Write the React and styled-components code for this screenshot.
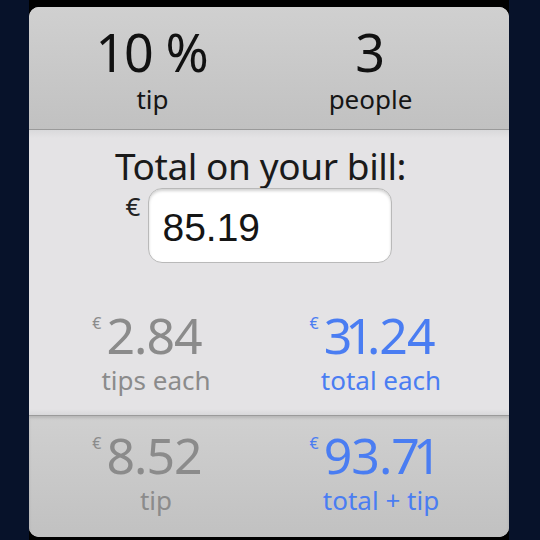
import React from 'react';
import styled, { createGlobalStyle } from 'styled-components';

const GlobalStyle = createGlobalStyle`
  html, body {
    margin: 0;
    padding: 0;
    background: #07122a;
    font-family: "Noto Sans", "DejaVu Sans", sans-serif;
  }
`;

const Screen = styled.div`
  width: 540px;
  height: 540px;
  background: #07122a;
  padding-left: 29px;
  box-sizing: border-box;
  overflow: hidden;
`;

const Phone = styled.div`
  width: 480px;
  height: 540px;
  background: #000;
  padding-top: 7px;
  box-sizing: border-box;
`;

const Card = styled.div`
  height: 530px;
  border-radius: 10px;
  overflow: hidden;
  display: flex;
  flex-direction: column;
  background: #e3e2e4;
`;

const Band = styled.div`
  height: ${p => p.h}px;
  box-sizing: border-box;
  background: linear-gradient(#d0d0d0, #c1c1c1);
  display: grid;
  grid-template-columns: ${p => p.cols || '225px 225px'};
  padding-left: 10px;
  align-content: start;
  padding-top: ${p => p.pt}px;
  border-top: ${p => (p.bottom ? '1px solid #9a9a9a' : 'none')};
  border-bottom: ${p => (p.bottom ? 'none' : '1px solid #9a9a9a')};
  box-shadow: ${p => (p.bottom ? 'inset 0 2px 3px rgba(0,0,0,0.12)' : 'none')};
`;

const Middle = styled.div`
  flex: 1;
  background: linear-gradient(#d9d9db, #e4e3e5 8px, #e4e3e5 calc(100% - 6px), #d8d8da);
  display: flex;
  flex-direction: column;
  align-items: center;
  padding-top: 13px;
`;

const Cell = styled.div`
  display: flex;
  flex-direction: column;
  align-items: center;
`;

const Big = styled.div`
  font-size: 52px;
  line-height: 52px;
  letter-spacing: -1px;
  color: #111;
`;

const Caption = styled.div`
  font-size: 26px;
  line-height: 30px;
  margin-top: ${p => p.gap || 0}px;
  color: ${p => p.color || '#151515'};
  padding-left: ${p => p.shift || 0}px;
`;

const Heading = styled.div`
  font-size: 37px;
  line-height: 45px;
  color: #1a1a1a;
  letter-spacing: -0.4px;
  margin-left: -17px;
`;

const InputRow = styled.div`
  display: flex;
  align-items: flex-start;
  margin-left: -20px;
`;

const Euro = styled.span`
  font-size: 26px;
  line-height: 30px;
  color: #222;
  margin-top: 3px;
  margin-right: 8px;
`;

const BillInput = styled.input`
  width: 244px;
  height: 75px;
  box-sizing: border-box;
  border: 1px solid #b9b9b9;
  border-radius: 14px;
  background: #fff;
  box-shadow: inset 0 2px 3px rgba(0,0,0,0.18);
  font-family: "Liberation Sans", Arial, sans-serif;
  font-size: 39px;
  color: #151515;
  padding: 4px 0 0 13px;
  outline: none;
`;

const Results = styled.div`
  display: grid;
  grid-template-columns: 225px 225px;
  padding-left: 10px;
  align-self: stretch;
  margin-top: 46px;
`;

const Amount = styled.div`
  display: flex;
  align-items: flex-start;
  padding-right: 9px;
  color: ${p => p.color};
`;

const Sup = styled.span`
  font-size: 16px;
  line-height: 20px;
  margin-top: 4px;
  margin-right: 5px;
`;

const Value = styled.span`
  font-size: 50px;
  line-height: 52px;
  letter-spacing: -1px;
`;

// the app font sets a narrow "1"
const One = styled.span`
  margin: 0 -6px;
`;

const GRAY = '#8b8b8b';
const BLUE = '#4a7df2';

function Money({ value, color }) {
  return (
    <Amount color={color}>
      <Sup>€</Sup>
      <Value>
        {value.split('').map((c, i) => (c === '1' ? <One key={i}>1</One> : c))}
      </Value>
    </Amount>
  );
}

export default function App() {
  return (
    <Screen>
      <GlobalStyle />
      <Phone>
        <Card>
          <Band h={123} pt={19} cols="225px 211px">
            <Cell>
              <Big>10 %</Big>
              <Caption shift={2} gap={6}>tip</Caption>
            </Cell>
            <Cell>
              <Big>3</Big>
              <Caption shift={2} gap={6}>people</Caption>
            </Cell>
          </Band>
          <Middle>
            <Heading>Total on your bill:</Heading>
            <InputRow>
              <Euro>€</Euro>
              <BillInput defaultValue="85.19" />
            </InputRow>
            <Results>
              <Cell>
                <Money value="2.84" color={GRAY} />
                <Caption color={GRAY} shift={9} gap={4}>tips each</Caption>
              </Cell>
              <Cell>
                <Money value="31.24" color={BLUE} />
                <Caption color={BLUE} shift={9} gap={4}>total each</Caption>
              </Cell>
            </Results>
          </Middle>
          <Band h={122} pt={13} bottom>
            <Cell>
              <Money value="8.52" color={GRAY} />
              <Caption color={GRAY} shift={9} gap={4}>tip</Caption>
            </Cell>
            <Cell>
              <Money value="93.71" color={BLUE} />
              <Caption color={BLUE} shift={9} gap={4}>total + tip</Caption>
            </Cell>
          </Band>
        </Card>
      </Phone>
    </Screen>
  );
}
